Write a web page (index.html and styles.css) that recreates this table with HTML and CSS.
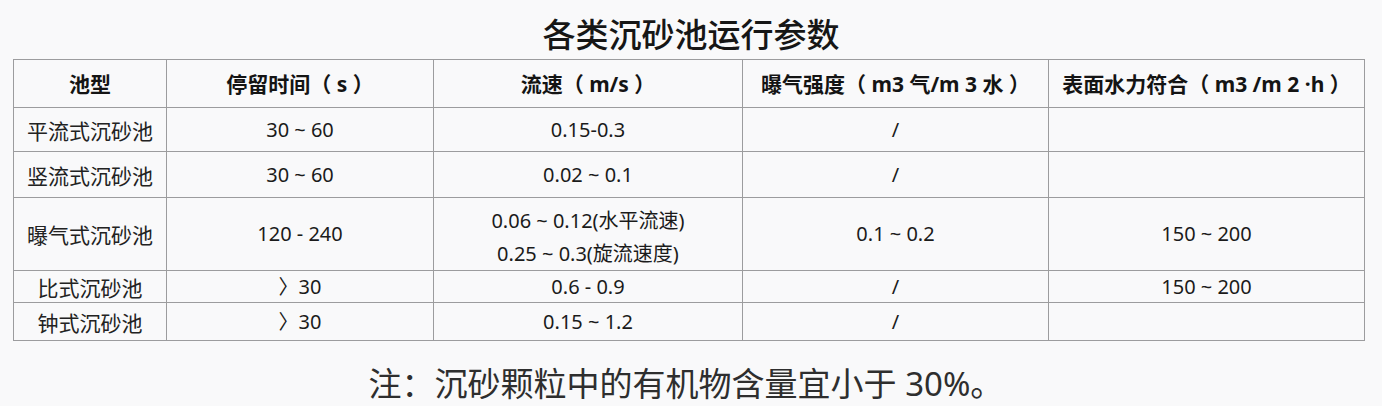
FILE: index.html
```html
<!DOCTYPE html>
<html lang="zh-CN">
<head>
<meta charset="utf-8">
<title>各类沉砂池运行参数</title>
<link rel="stylesheet" href="styles.css">
</head>
<body>
<div class="page">
  <h1 class="title">各类沉砂池运行参数</h1>
  <table class="params">
    <colgroup>
      <col class="c1"><col class="c2"><col class="c3"><col class="c4"><col class="c5">
    </colgroup>
    <thead>
      <tr class="r-head">
        <th>池型</th>
        <th>停留时间（ s ）</th>
        <th>流速（ m/s ）</th>
        <th>曝气强度（ m3 气/m 3 水 ）</th>
        <th>表面水力符合（ m3 /m 2 ·h ）</th>
      </tr>
    </thead>
    <tbody>
      <tr class="r1">
        <td class="name">平流式沉砂池</td>
        <td>30 ~ 60</td>
        <td>0.15-0.3</td>
        <td>/</td>
        <td></td>
      </tr>
      <tr class="r2">
        <td class="name">竖流式沉砂池</td>
        <td>30 ~ 60</td>
        <td>0.02 ~ 0.1</td>
        <td>/</td>
        <td></td>
      </tr>
      <tr class="r3">
        <td class="name">曝气式沉砂池</td>
        <td>120 - 240</td>
        <td class="two"><div>0.06 ~ 0.12(水平流速)</div><div>0.25 ~ 0.3(旋流速度)</div></td>
        <td>0.1 ~ 0.2</td>
        <td>150 ~ 200</td>
      </tr>
      <tr class="r4">
        <td class="name">比式沉砂池</td>
        <td>〉30</td>
        <td>0.6 - 0.9</td>
        <td>/</td>
        <td>150 ~ 200</td>
      </tr>
      <tr class="r5">
        <td class="name">钟式沉砂池</td>
        <td>〉30</td>
        <td>0.15 ~ 1.2</td>
        <td>/</td>
        <td></td>
      </tr>
    </tbody>
  </table>
  <p class="note">注：沉砂颗粒中的有机物含量宜小于 30%。</p>
</div>
</body>
</html>
```

FILE: styles.css
```css
html, body {
  margin: 0;
  padding: 0;
  background: #f9f9fa;
}

.page {
  width: 1382px;
  font-family: "Noto Sans", "Noto Sans CJK SC", sans-serif;
  color: #1b1b1b;
}

.title {
  margin: 13px 0 6px 0;
  padding-left: 0;
  height: 40px;
  line-height: 40px;
  font-size: 33px;
  font-weight: 500;
  text-align: center;
  color: #161616;
  font-family: "Noto Sans CJK SC", sans-serif;
}

.params {
  margin-left: 13px;
  width: 1352px;
  table-layout: fixed;
  border-collapse: collapse;
  font-size: 20px;
}

.c1 { width: 153px; }
.c2 { width: 267px; }
.c3 { width: 309px; }
.c4 { width: 306px; }
.c5 { width: 316px; }

.params th,
.params td {
  border: 1px solid #9c9c9e;
  padding: 0;
  text-align: center;
  vertical-align: middle;
  line-height: 28px;
}

.params th {
  font-weight: 700;
  font-size: 21px;
  color: #141414;
}

.params td.name {
  font-family: "Noto Sans CJK SC", sans-serif;
  color: #222;
  font-size: 21px;
}

.r-head { height: 48px; }
.r1 { height: 44px; }
.r2 { height: 46px; }
.r3 { height: 70px; }
.r4 { height: 32px; }
.r5 { height: 38px; }

.params td.two {
  line-height: 33px;
  padding-top: 6px;
}

.note {
  margin: 21px 0 0 0;
  height: 44px;
  line-height: 44px;
  font-size: 33px;
  font-weight: 400;
  text-align: center;
  color: #2e2e2e;
  padding-right: 10px;
}
```
